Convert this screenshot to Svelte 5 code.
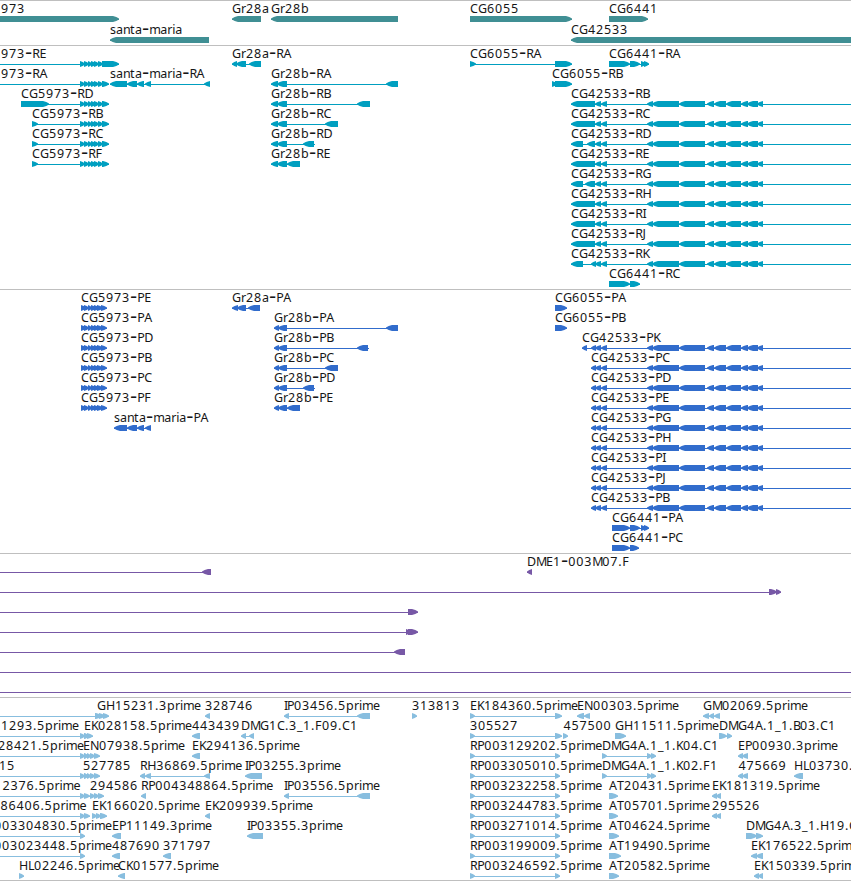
<script lang="ts">
  type Feature = {
    row: number;
    name: string;
    x: number;
    strand: string;
    exons: number[][];
    from: number;
    to: number;
  };

  const WIDTH = 851;
  const HEAD = 6;

  // advance of every glyph in a label, in pixels
  const advances: Record<string, number> = {
    A: 8, B: 7, C: 8, D: 9, E: 7, F: 7, G: 9, H: 9, I: 3, J: 4, K: 7, L: 6, M: 10, N: 9, P: 7, R: 7.2, T: 7,
    a: 7, b: 8, e: 7, i: 3, m: 11, n: 7, p: 8, r: 5, s: 6, t: 5,
    '.': 4, '-': 7.2, _: 6
  };

  // feature = row, name, label x, strand, "start-end" exons, optional extent of the intron line
  function feature(row: number, name: string, x: number, strand: string, exons: string, from?: number, to?: number): Feature {
    const list = exons ? exons.split(' ').map((e) => e.split('-').map(Number)) : [];
    return {
      row,
      name,
      x,
      strand,
      exons: list,
      from: from ?? list[0][0],
      to: to ?? list[list.length - 1][1]
    };
  }

  function glyphX(name: string, x: number) {
    let pos = x;
    return [...name].map((ch) => {
      const at = pos;
      pos += advances[ch] ?? 8;
      return at.toFixed(1);
    }).join(' ');
  }

  // the hyphen is set larger, so it sits a little lower
  function glyphY(name: string, y: number) {
    return [...name].map((ch) => (ch === '-' ? y + 1.4 : y)).join(' ');
  }

  function arrow([start, end]: number[], strand: string, top: number) {
    const head = Math.min(HEAD, end - start);
    const dir = strand === '+' ? 1 : -1;
    const tip = strand === '+' ? end : start;
    const tail = strand === '+' ? start : end;
    const neck = tip - dir * head;
    const mid = tip - dir * head * 0.45;
    return `M${tail} ${top}H${neck}L${mid} ${top + 1}L${tip} ${top + 2.5}V${top + 3.5}L${mid} ${top + 5}L${neck} ${top + 6}H${tail}Z`;
  }

  const cg5973 = '80-85 84-89 88-92 91-96 94-99 98-103';
  const cg5973p = '81-86 84-89 88-92 91-96 94-99 97-103 101-107';
  const cg42533 = '647-653 652-679 679-705 707-714 714-726 726-741 741-748 747-758 757-763';
  const tail3 = '595-601 601-607 ' + cg42533;
  const est5 = '80-85 84-88 87-91 90-95 94-100';
  const rp = '470-475 555-560';

  const genes = [
    feature(0, '973', 1, '+', '0-119'),
    feature(1, 'santa-maria', 110, '-', '110-209'),
    feature(0, 'Gr28a', 232, '-', '232-261'),
    feature(0, 'Gr28b', 271, '-', '271-398'),
    feature(0, 'CG6055', 470, '+', '470-572'),
    feature(0, 'CG6441', 609, '+', '609-648'),
    feature(1, 'CG42533', 571, '-', '571-860')
  ];

  const transcripts = [
    feature(0, '973-RE', 1, '+', cg5973 + ' 102-119', 0),
    feature(1, '973-RA', 1, '+', cg5973 + ' 102-109', 0),
    feature(2, 'CG5973-RD', 21, '+', '21-49 ' + cg5973 + ' 102-109'),
    ...['RB', 'RC', 'RF'].map((id, i) => feature(3 + i, 'CG5973-' + id, 32, '+', '32-38 ' + cg5973 + ' 102-109')),
    feature(1, 'santa-maria-RA', 110, '-', '110-127 127-137 137-144 145-151 204-210'),
    feature(0, 'Gr28a-RA', 232, '-', '232-237 236-246 249-261'),
    feature(1, 'Gr28b-RA', 271, '-', '271-278 277-287 386-398'),
    feature(2, 'Gr28b-RB', 271, '-', '271-278 277-287 357-370'),
    feature(3, 'Gr28b-RC', 271, '-', '271-278 277-287 325-338'),
    feature(4, 'Gr28b-RD', 271, '-', '271-278 277-287 303-314', 271, 315),
    feature(5, 'Gr28b-RE', 271, '-', '271-278 277-287 287-300'),
    feature(0, 'CG6055-RA', 470, '+', '470-476 555-572'),
    feature(1, 'CG6055-RB', 552, '+', '552-557 555-572'),
    feature(0, 'CG6441-RA', 609, '+', '609-630 630-640 641-646 644-649'),
    ...['RB', 'RC', 'RD', 'RE', 'RG', 'RH', 'RI', 'RJ', 'RK'].map((id, i) => {
      const first: Record<string, string> = { RD: '571-583 587-595 ', RG: '571-583 585-595 ', RK: '571-583 591-596 ' };
      return feature(2 + i, 'CG42533-' + id, 571, '-', (first[id] ?? '571-595 ') + tail3, 571, WIDTH);
    }),
    feature(11, 'CG6441-RC', 609, '+', '609-630 630-640')
  ];

  const proteins = [
    ...['PE', 'PA', 'PD', 'PB', 'PC', 'PF'].map((id, i) => feature(i, 'CG5973-' + id, 81, '+', cg5973p)),
    feature(6, 'santa-maria-PA', 114, '-', '114-127 127-137 137-144 145-151'),
    feature(0, 'Gr28a-PA', 232, '-', '232-238 237-246 248-260'),
    feature(1, 'Gr28b-PA', 274, '-', '274-279 278-287 386-398'),
    feature(2, 'Gr28b-PB', 274, '-', '274-279 278-287 357-368', 274, 369),
    feature(3, 'Gr28b-PC', 274, '-', '274-279 278-287 325-338'),
    feature(4, 'Gr28b-PD', 274, '-', '274-279 278-287 303-314', 274, 315),
    feature(5, 'Gr28b-PE', 274, '-', '274-279 278-287 287-300'),
    feature(0, 'CG6055-PA', 555, '+', '555-567'),
    feature(1, 'CG6055-PB', 555, '+', '555-567'),
    feature(2, 'CG42533-PK', 582, '-', '582-587 591-596 ' + tail3, 582, WIDTH),
    ...['PC', 'PD', 'PE', 'PG', 'PH', 'PI', 'PJ', 'PB'].map((id, i) =>
      feature(3 + i, 'CG42533-' + id, 591, '-', '591-596 ' + tail3, 591, WIDTH)
    ),
    feature(11, 'CG6441-PA', 612, '+', '612-630 630-640 641-646 644-649'),
    feature(12, 'CG6441-PC', 612, '+', '612-630 630-639')
  ];

  const clones = [
    feature(0, '', 0, '-', '202-211', 0),
    feature(0, 'DME1-003M07.F', 527, '-', '527-532'),
    feature(1, '', 0, '+', '769-777 776-781', 0),
    feature(2, '', 0, '+', '408-418', 0),
    feature(3, '', 0, '+', '406-411 408-418', 0),
    feature(4, '', 0, '-', '394-405', 0),
    feature(5, '', 0, '+', '', 0, WIDTH),
    feature(6, '', 0, '+', '', 0, WIDTH)
  ];

  const ests = [
    feature(0, 'GH15231.3prime', 97, '+', '95-102 99-105 103-109', 0),
    feature(0, '328746', 205, '-', '205-210'),
    feature(0, 'IP03456.5prime', 284, '-', '284-289 357-370'),
    feature(0, '313813', 412, '+', '412-417'),
    feature(0, 'EK184360.5prime', 470, '+', '470-475 555-562'),
    feature(0, 'EN00303.5prime', 577, '-', '577-584 584-590'),
    feature(0, 'GM02069.5prime', 703, '-', '703-709 709-714 714-720'),

    feature(1, '1293.5prime', 1, '+', '80-85 84-89 87-93', 0),
    feature(1, 'EK028158.5prime', 84, '+', '84-89'),
    feature(1, '443439', 192, '-', '192-200'),
    feature(1, 'DMG1C.3_1.F09.C1', 241, '-', '241-246 249-254'),
    feature(1, '305527', 470, '+', '470-475 555-562'),
    feature(1, '457500', 563.5, '+', '563-568'),
    feature(1, 'GH11511.5prime', 615, '+', '615-626'),
    feature(1, 'DMG4A.1_1.B03.C1', 719, '+', '719-727 727-732'),

    feature(2, '28421.5prime', -2, '+', est5, 0),
    feature(2, 'EN07938.5prime', 83, '+', '84-88'),
    feature(2, 'EK294136.5prime', 192, '-', '192-200'),
    feature(2, 'RP003129202.5prime', 470, '+', rp),
    feature(2, 'DMG4A.1_1.K04.C1', 602, '+', '602-607 647-652 651-656'),
    feature(2, 'EP00930.3prime', 738, '-', '738-743 742-748'),

    feature(3, '15', -1, '+', est5, 0),
    feature(3, '527785', 83, '+', '84-88'),
    feature(3, 'RH36869.5prime', 140, '-', '140-145 145-151 204-210'),
    feature(3, 'IP03255.3prime', 245, '-', '245-262'),
    feature(3, 'RP003305010.5prime', 470, '+', rp),
    feature(3, 'DMG4A.1_1.K02.F1', 602, '+', '602-607 647-652 651-656'),
    feature(3, '475669', 738.5, '-', '738-743 742-748'),
    feature(3, 'HL03730.5prime', 794, '-', '794-803'),

    feature(4, '12376.5prime', -5.5, '+', '80-85 84-90', 0),
    feature(4, '294586', 90, '+', '90-95 94-99 98-104'),
    feature(4, 'RP004348864.5prime', 141, '-', '141-146'),
    feature(4, 'IP03556.5prime', 284, '-', '284-289 357-370'),
    feature(4, 'RP003232258.5prime', 470, '+', rp),
    feature(4, 'AT20431.5prime', 609, '+', '609-618'),
    feature(4, 'EK181319.5prime', 712, '-', '712-717 716-721'),

    feature(5, '86406.5prime', 0.5, '+', '80-85 84-90', 0),
    feature(5, 'EK166020.5prime', 92, '+', '92-97 96-101 100-107'),
    feature(5, 'EK209939.5prime', 205, '-', '205-210'),
    feature(5, 'RP003244783.5prime', 470, '+', rp),
    feature(5, 'AT05701.5prime', 609, '+', '609-618'),
    feature(5, '295526', 712, '-', '712-717 716-721'),

    feature(6, '003304830.5prime', -6, '+', '80-85', 0),
    feature(6, 'EP11149.3prime', 112, '-', '112-121'),
    feature(6, 'IP03355.3prime', 247, '-', '247-263'),
    feature(6, 'RP003271014.5prime', 470, '+', rp),
    feature(6, 'AT04624.5prime', 609, '+', '609-619'),
    feature(6, 'DMG4A.3_1.H19.C1', 746, '+', '746-757 756-763'),

    feature(7, '003023448.5prime', -6, '+', '80-85', 0),
    feature(7, '487690', 112, '-', '112-120'),
    feature(7, '371797', 163, '-', '163-171'),
    feature(7, 'RP003199009.5prime', 470, '+', rp),
    feature(7, 'AT19490.5prime', 609, '+', '609-621'),
    feature(7, 'EK176522.5prime', 751, '-', '751-757 756-763'),

    feature(8, 'HL02246.5prime', 19, '+', '19-24'),
    feature(8, 'CK01577.5prime', 118, '-', '118-125'),
    feature(8, 'RP003246592.5prime', 470, '+', rp),
    feature(8, 'AT20582.5prime', 609, '+', '609-619'),
    feature(8, 'EK150339.5prime', 754, '-', '754-759 758-763')
  ];

  const tracks = [
    { id: 'genes', height: 44, pitch: 21, features: genes },
    { id: 'transcripts', height: 243, pitch: 20, features: transcripts },
    { id: 'proteins', height: 263, pitch: 20, features: proteins },
    { id: 'clones', height: 143, pitch: 20, features: clones },
    { id: 'ests', height: 182, pitch: 20, features: ests }
  ];
</script>

<main class="browser">
  {#each tracks as track}
    <section class="track {track.id}">
      <svg width={WIDTH} height={track.height} viewBox="0 0 {WIDTH} {track.height}">
        {#each track.features as f}
          {@const top = f.row * track.pitch + 15}
          <rect x={f.from} y={top + 3} width={f.to - f.from} height="1" />
          {#each f.exons as exon}
            <path d={arrow(exon, f.strand, top)} />
          {/each}
        {/each}
        {#each track.features as f}
          {#if f.name}
            <text x={glyphX(f.name, f.x)} y={glyphY(f.name, f.row * track.pitch + 12)}>{#each f.name.split('-') as part, i}{#if i}<tspan class="dash">-</tspan>{/if}{part}{/each}</text>
          {/if}
        {/each}
      </svg>
    </section>
  {/each}
</main>

<style>
  :global(body) {
    margin: 0;
    background: #fff;
  }

  .browser {
    width: 851px;
    border-bottom: 1px solid #bfbfbf;
    overflow: hidden;
  }

  .track {
    border-top: 1px solid #bfbfbf;
  }

  svg {
    display: block;
    overflow: hidden;
  }

  text {
    font-family: 'Noto Sans', 'Open Sans', sans-serif;
    font-size: 12.5px;
    fill: #161616;
  }

  .dash {
    font-family: 'DejaVu Sans', sans-serif;
    font-size: 20px;
  }

  .genes {
    fill: #408f94;
  }

  .transcripts {
    fill: #009fc0;
  }

  .proteins {
    fill: #316ccc;
  }

  .clones {
    fill: #7758a6;
  }

  .ests {
    fill: #88bedf;
  }
</style>
